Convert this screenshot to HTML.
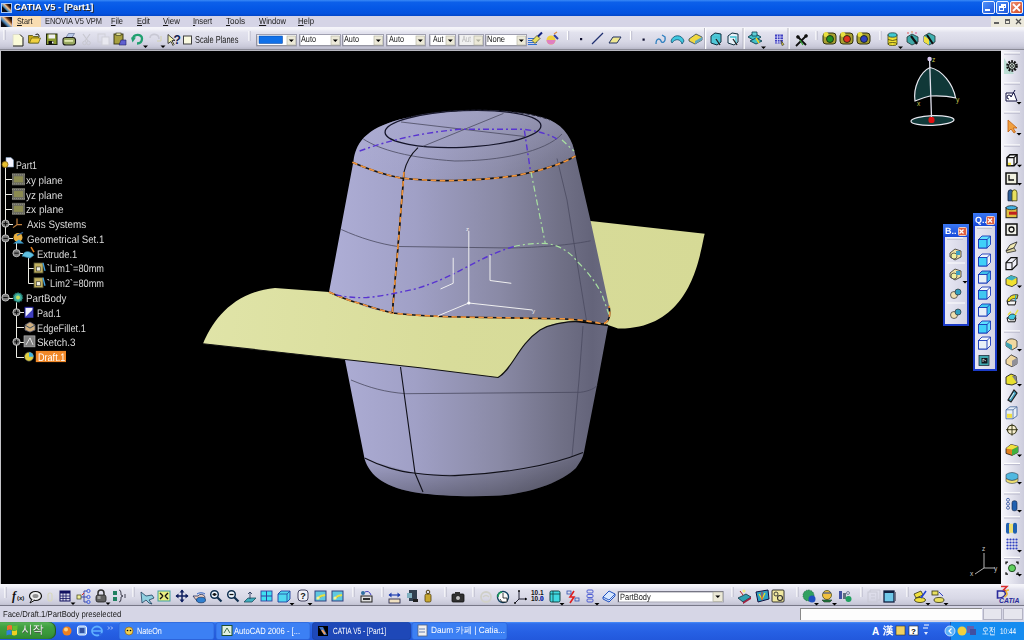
<!DOCTYPE html><html><head><meta charset="utf-8"><style>
*{margin:0;padding:0;box-sizing:border-box}
html,body{width:1024px;height:640px;overflow:hidden;background:#000}
body{position:relative;font-family:"Liberation Sans",sans-serif;font-size:9px;color:#000}
.a{position:absolute}
.t{position:absolute;white-space:nowrap;line-height:1;transform-origin:0 0;text-rendering:geometricPrecision;filter:grayscale(1);padding:1px 3px 2px 0;margin-top:-1px}
svg{position:absolute;left:0;top:0;overflow:visible}
</style></head><body><div class="a" style="left:0px;top:0px;width:1024px;height:16px;background:linear-gradient(#3a8af6 0%,#0c60ea 14%,#0558e6 50%,#0452de 85%,#0346c8 100%)"></div>
<div class="a" style="left:1px;top:3px;width:10.5px;height:9.5px;background:#a8c8f8"></div>
<div class="a" style="left:2px;top:4px;width:8.5px;height:7.5px;background:linear-gradient(45deg,#0a0a10 0%,#0a0a10 30%,#5090c0 42%,#f0c090 58%,#603010 72%,#0a0a10 85%)"></div>
<div class="t" style="left:14.20px;top:3px;font-size:8.85px;font-weight:bold;color:#fff;transform:scaleX(1.054);text-shadow:1px 1px 0 #0a2a80">CATIA V5 - [Part1]</div>
<div class="a" style="left:982px;top:1px;width:13px;height:13px;background:linear-gradient(135deg,#4f90f8,#1e58dc);border:1px solid #f0f4ff;border-radius:2px"></div>
<div class="a" style="left:996px;top:1px;width:13px;height:13px;background:linear-gradient(135deg,#4f90f8,#1e58dc);border:1px solid #f0f4ff;border-radius:2px"></div>
<div class="a" style="left:1010px;top:1px;width:13px;height:13px;background:linear-gradient(135deg,#f09070,#d04a28);border:1px solid #f0f4ff;border-radius:2px"></div>
<div class="a" style="left:985px;top:9px;width:5px;height:2px;background:#fff"></div>
<div class="a" style="left:1001px;top:4px;width:5px;height:4px;border:1px solid #fff;border-top-width:2px"></div>
<div class="a" style="left:999px;top:6px;width:5px;height:5px;border:1px solid #fff;border-top-width:2px;background:#3a70e4"></div>
<svg width="1024" height="640" style="pointer-events:none"><path d="M1013,4 L1020,11 M1020,4 L1013,11" stroke="#fff" stroke-width="1.8"/></svg>
<div class="a" style="left:0px;top:16px;width:1024px;height:11px;background:#d5d4e6"></div>
<div class="a" style="left:1px;top:17px;width:10.5px;height:10px;background:linear-gradient(45deg,#0a0a10 0%,#0a0a10 25%,#4a88c0 40%,#f0c090 58%,#703810 72%,#0a0a10 88%)"></div>
<div class="a" style="left:12.5px;top:16px;width:28px;height:11px;background:#f9ddb2"></div>
<div class="t" style="left:16.60px;top:17px;font-size:8.85px;font-weight:normal;color:#1a1a1a;transform:scaleX(0.825);"><u>S</u>tart</div>
<div class="t" style="left:45.00px;top:17px;font-size:8.85px;font-weight:normal;color:#1a1a1a;transform:scaleX(0.840);">ENOVIA V5 VPM</div>
<div class="t" style="left:111.00px;top:17px;font-size:8.85px;font-weight:normal;color:#1a1a1a;transform:scaleX(0.842);"><u>F</u>ile</div>
<div class="t" style="left:137.00px;top:17px;font-size:8.85px;font-weight:normal;color:#1a1a1a;transform:scaleX(0.849);"><u>E</u>dit</div>
<div class="t" style="left:163.00px;top:17px;font-size:8.85px;font-weight:normal;color:#1a1a1a;transform:scaleX(0.889);"><u>V</u>iew</div>
<div class="t" style="left:193.00px;top:17px;font-size:8.85px;font-weight:normal;color:#1a1a1a;transform:scaleX(0.859);"><u>I</u>nsert</div>
<div class="t" style="left:226.00px;top:17px;font-size:8.85px;font-weight:normal;color:#1a1a1a;transform:scaleX(0.921);"><u>T</u>ools</div>
<div class="t" style="left:259.00px;top:17px;font-size:8.85px;font-weight:normal;color:#1a1a1a;transform:scaleX(0.857);"><u>W</u>indow</div>
<div class="t" style="left:298.00px;top:17px;font-size:8.85px;font-weight:normal;color:#1a1a1a;transform:scaleX(0.878);"><u>H</u>elp</div>
<div class="a" style="left:991px;top:16px;width:33px;height:11px;background:#ece9dc"></div>
<div class="a" style="left:994px;top:22px;width:5px;height:2px;background:#606060"></div>
<div class="a" style="left:1005px;top:19px;width:5px;height:5px;border:1px solid #606060;border-top-width:2px"></div>
<svg width="1024" height="640"><path d="M1016,19 L1021,24 M1021,19 L1016,24" stroke="#505050" stroke-width="1.3"/></svg>
<div class="a" style="left:0px;top:27px;width:1024px;height:22px;background:linear-gradient(#f6f6fb 0%,#f2f2f8 10%,#e2e2ee 25%,#d8d8e6 65%,#cacada 88%,#b8b8c8 100%)"></div>
<div class="a" style="left:0px;top:48.5px;width:1024px;height:1.6px;background:#8a8a96"></div>
<div class="a" style="left:0px;top:50px;width:1024px;height:1px;background:#b8b8c0"></div>
<div class="a" style="left:0px;top:51px;width:1001px;height:533px;background:#000;border-left:1.2px solid #c4c4c8"></div>
<svg width="1024" height="640" viewBox="0 0 1024 640">
<defs>
<linearGradient id="bodyg" x1="330" y1="0" x2="612" y2="0" gradientUnits="userSpaceOnUse">
<stop offset="0" stop-color="#aeaed6"/><stop offset="0.3" stop-color="#a0a0c6"/><stop offset="0.6" stop-color="#8a8aa6"/><stop offset="0.82" stop-color="#707086"/><stop offset="0.93" stop-color="#64647a"/><stop offset="1" stop-color="#6c6c82"/>
</linearGradient>
<linearGradient id="capg" x1="0" y1="110" x2="0" y2="180" gradientUnits="userSpaceOnUse">
<stop offset="0" stop-color="#b0b0d4" stop-opacity="0.5"/><stop offset="1" stop-color="#b0b0d4" stop-opacity="0"/>
</linearGradient>
<linearGradient id="surfg" x1="200" y1="290" x2="700" y2="330" gradientUnits="userSpaceOnUse">
<stop offset="0" stop-color="#e0e4a8"/><stop offset="0.5" stop-color="#d8dc9a"/><stop offset="1" stop-color="#d6da96"/>
</linearGradient>
<linearGradient id="botg" x1="0" y1="455" x2="0" y2="497" gradientUnits="userSpaceOnUse">
<stop offset="0" stop-color="#000" stop-opacity="0"/><stop offset="1" stop-color="#000" stop-opacity="0.3"/>
</linearGradient>
</defs>
<path d="M329,292 L345,360 L364.6,459 C370,476 385,488 419,493 C440,496 470,497 500,495.5 C530,493 560,483 576,468 C580,462 583,458 584,452 L598,380 L608,326 Z" fill="url(#bodyg)"/>
<path d="M364.6,459 C370,476 385,488 419,493 C440,496 470,497 500,495.5 C530,493 560,483 576,468 C580,462 583,458 584,452 C560,470 470,478 414,473 Z" fill="url(#botg)"/>
<path d="M203,343.8 C212,322 232,292 275,288 L329,292 L590.6,221 L704.7,233.75 C700,250 694,330 618,328.5 L608,325 L584,321.4 C565,321 552,323 540,330 C518,345 512,370 498,377.5 L420,367.8 Z" fill="url(#surfg)"/>
<path d="M203,343.8 L420,367.8 L498,377.5 C512,370 518,345 540,330 C552,323 565,321 584,321.4 L608,325" fill="none" stroke="#101010" stroke-width="1.1"/>
<path d="M353.5,161 C356,140 370,126 406,118 C430,112 455,110.2 481.6,110.2 C510,110.5 535,114 550,120 C565,127 573,140 575.5,156 L590.6,221 L609,306 C611,316 610,322 603,324 C585,321 570,319 557,319 L472,317.3 C440,316 410,315 392.3,313 C375,310 360,306 358.3,303 C345,299 335,295 329,292 Z" fill="url(#bodyg)"/>
<path d="M353.5,161 C356,140 370,126 406,118 C430,112 455,110.2 481.6,110.2 C510,110.5 535,114 550,120 C565,127 573,140 575.5,156 C540,172 500,180 454.8,180.5 C410,180 370,172 353.5,161 Z" fill="url(#capg)"/>
<path d="M363.3,139 C380,150 410,158 454.8,161 C500,161 545,152 562,134" stroke="#4a4a60" stroke-width="0.8" fill="none"/>
<path d="M341.3,229.5 C360,238 380,244 398,246.5 L511.3,248 C550,247 575,244 590.6,240.8" stroke="#4a4a60" stroke-width="0.8" fill="none"/>
<path d="M351,380 C370,388 385,392 405.6,393.7 L580.4,392.3 C590,391 595,388 597,385.5" stroke="#4a4a60" stroke-width="0.8" fill="none"/>
<path d="M557,158.5 L567,200 L586.4,320" stroke="#4a4a60" stroke-width="0.8" fill="none"/>
<path d="M579,380 L572,456.5" stroke="#4a4a60" stroke-width="0.8" fill="none"/>
<path d="M583,326 L579,380" stroke="#4a4a60" stroke-width="0.8" fill="none"/>
<ellipse cx="463" cy="129" rx="78" ry="18.3" transform="rotate(-2.5 463 129)" fill="none" stroke="#15152a" stroke-width="1.3"/>
<path d="M401,122 L525.5,136.6 M423,146.3 L503.5,113.4" stroke="#4a4a60" stroke-width="0.8"/>
<path d="M406,118 C430,112 455,110.2 481.6,110.2 C510,110.5 535,114 550,120" fill="none" stroke="#202030" stroke-width="1" stroke-dasharray="4 2"/>
<path d="M418,147.6 C410,155 406,163 404,172 L398,246.5 L392.3,313" stroke="#101018" stroke-width="1.1" fill="none"/>
<path d="M400.5,367 L415,473 L423,492" stroke="#101018" stroke-width="1.1" fill="none"/>
<path d="M364.6,458 C380,466 400,472 414,473 C430,475 445,476 455,475.6 C500,474 550,466 583,452.4" stroke="#101018" stroke-width="1.1" fill="none"/>
<path d="M352.3,162.2 C370,170 390,176 401,178 C420,180 440,181 454.8,180.5 C480,180 500,178 515.7,175.6 C540,171 560,165 575.5,156" stroke="#141414" stroke-width="1.6" fill="none"/>
<path d="M352.3,162.2 C370,170 390,176 401,178 C420,180 440,181 454.8,180.5 C480,180 500,178 515.7,175.6 C540,171 560,165 575.5,156" stroke="#f0943c" stroke-width="1.7" fill="none" stroke-dasharray="5.5 3.5"/>
<path d="M329,292 C340,297 350,301 358.3,303 C370,307 380,310 392.3,313 C420,316 450,317 472,317.3 L557,318.7 C575,319 590,321 603,324 C609,322 611,316 609,306" stroke="#141414" stroke-width="1.6" fill="none"/>
<path d="M329,292 C340,297 350,301 358.3,303 C370,307 380,310 392.3,313 C420,316 450,317 472,317.3 L557,318.7 C575,319 590,321 603,324 C609,322 611,316 609,306" stroke="#f0943c" stroke-width="1.7" fill="none" stroke-dasharray="5.5 3.5"/>
<path d="M404,172 L398,246.5 L392.3,313" stroke="#141414" stroke-width="1.6" fill="none"/>
<path d="M404,172 L398,246.5 L392.3,313" stroke="#f0943c" stroke-width="1.7" fill="none" stroke-dasharray="5.5 3.5"/>
<path d="M359.6,151 C390,140 420,133 459.6,129.3 L523,129.3 C540,131 550,135 557,139" stroke="#5834d0" stroke-width="1.4" fill="none" stroke-dasharray="6 3 2 3"/>
<path d="M524.4,130.5 L530.4,170.7" stroke="#5834d0" stroke-width="1.4" fill="none" stroke-dasharray="6 3 2 3"/>
<path d="M335.7,294.6 C345,297 355,298 366.8,297.5 C385,296 400,292 415,289 C435,283 450,276 463,269 C480,260 495,252 514,246.5" stroke="#5834d0" stroke-width="1.4" fill="none" stroke-dasharray="6 3 2 3"/>
<path d="M514,246.5 C525,244 535,243 548,243.6 C560,246 570,252 576.5,260.7 C588,272 597,284 602,294.6 L609,314.5" stroke="#a8e0a0" stroke-width="1.2" fill="none" stroke-dasharray="6 3 2 3"/>
<path d="M531,172 L545.3,243.6" stroke="#a8e0a0" stroke-width="1.2" fill="none" stroke-dasharray="6 3 2 3"/>
<path d="M562,140 L574,151" stroke="#a8e0a0" stroke-width="1.2" fill="none" stroke-dasharray="6 3 2 3"/>
<path d="M468.8,303 L468.8,231 M468.8,303 L532.5,310 M468.8,303 L437.6,316" stroke="#f0f0f0" stroke-width="1" fill="none"/>
<path d="M453.2,257.8 L453.2,283.3 L440.5,289 M490,255 L490,280.5 L511.3,283.3" stroke="#f0f0f0" stroke-width="1" fill="none"/>
<circle cx="468.8" cy="303" r="1.6" fill="#fff"/>
<text x="466" y="231" font-size="6" fill="#eee" font-family="Liberation Sans">z</text>
<text x="532" y="313" font-size="6" fill="#eee" font-family="Liberation Sans">y</text>
</svg>
<svg width="1024" height="640">
<path d="M5.5,167 L5.5,297.52" stroke="#ecece4" stroke-width="1" fill="none"/>
<path d="M5,179.5 L12,179.5" stroke="#ecece4" stroke-width="1" fill="none"/>
<path d="M5,194.5 L12,194.5" stroke="#ecece4" stroke-width="1" fill="none"/>
<path d="M5,209.5 L12,209.5" stroke="#ecece4" stroke-width="1" fill="none"/>
<path d="M5,224.5 L13,224.5" stroke="#ecece4" stroke-width="1" fill="none"/>
<path d="M5,238.5 L13,238.5" stroke="#ecece4" stroke-width="1" fill="none"/>
<path d="M5,298.5 L13,298.5" stroke="#ecece4" stroke-width="1" fill="none"/>
<path d="M16.5,242.39999999999998 L16.5,253.5 L23,253.5" stroke="#ecece4" stroke-width="1" fill="none"/>
<path d="M28.5,257.18 L28.5,283.5 L34,283.5 M28.5,268.5 L34,268.5" stroke="#ecece4" stroke-width="1" fill="none"/>
<path d="M16.5,301.52 L16.5,357.5 L24,357.5" stroke="#ecece4" stroke-width="1" fill="none"/>
<path d="M16.5,312.5 L24,312.5" stroke="#ecece4" stroke-width="1" fill="none"/>
<path d="M16.5,327.5 L24,327.5" stroke="#ecece4" stroke-width="1" fill="none"/>
<path d="M16.5,342.5 L24,342.5" stroke="#ecece4" stroke-width="1" fill="none"/>
<circle cx="5.5" cy="223.62" r="3.6" fill="#7a7a7a" stroke="#d0d0d0" stroke-width="0.8"/><path d="M3.3,223.62 L7.7,223.62" stroke="#101010" stroke-width="1.1"/><path d="M5.5,221.42000000000002 L5.5,225.82" stroke="#101010" stroke-width="1.1"/>
<circle cx="5.5" cy="238.39999999999998" r="3.6" fill="#7a7a7a" stroke="#d0d0d0" stroke-width="0.8"/><path d="M3.3,238.39999999999998 L7.7,238.39999999999998" stroke="#101010" stroke-width="1.1"/>
<circle cx="5.5" cy="297.52" r="3.6" fill="#7a7a7a" stroke="#d0d0d0" stroke-width="0.8"/><path d="M3.3,297.52 L7.7,297.52" stroke="#101010" stroke-width="1.1"/>
<circle cx="16.5" cy="253.18" r="3.6" fill="#7a7a7a" stroke="#d0d0d0" stroke-width="0.8"/><path d="M14.3,253.18 L18.7,253.18" stroke="#101010" stroke-width="1.1"/>
<circle cx="16.5" cy="312.29999999999995" r="3.6" fill="#7a7a7a" stroke="#d0d0d0" stroke-width="0.8"/><path d="M14.3,312.29999999999995 L18.7,312.29999999999995" stroke="#101010" stroke-width="1.1"/><path d="M16.5,310.09999999999997 L16.5,314.49999999999994" stroke="#101010" stroke-width="1.1"/>
<circle cx="16.5" cy="341.86" r="3.6" fill="#7a7a7a" stroke="#d0d0d0" stroke-width="0.8"/><path d="M14.3,341.86 L18.7,341.86" stroke="#101010" stroke-width="1.1"/><path d="M16.5,339.66 L16.5,344.06" stroke="#101010" stroke-width="1.1"/>
<path d="M6,157.5 L11,157.5 L13.5,160 L13.5,167 L6,167 Z" fill="#f4f4ff" stroke="#80a0c0" stroke-width="0.6"/>
<circle cx="5" cy="164.5" r="3" fill="#e8c030" stroke="#806010" stroke-width="0.8"/>
<rect x="12" y="173.28" width="13" height="12" fill="#6a6a60"/>
<rect x="14" y="176.28" width="9" height="6" fill="#8a8a50"/>
<path d="M12,174.78 h13 M12,183.78 h13" stroke="#909088" stroke-width="1" stroke-dasharray="1 1"/>
<rect x="12" y="188.06" width="13" height="12" fill="#6a6a60"/>
<rect x="14" y="191.06" width="9" height="6" fill="#8a8a50"/>
<path d="M12,189.56 h13 M12,198.56 h13" stroke="#909088" stroke-width="1" stroke-dasharray="1 1"/>
<rect x="12" y="202.84" width="13" height="12" fill="#6a6a60"/>
<rect x="14" y="205.84" width="9" height="6" fill="#8a8a50"/>
<path d="M12,204.34 h13 M12,213.34 h13" stroke="#909088" stroke-width="1" stroke-dasharray="1 1"/>
<path d="M17,218.62 L17,224.62 L13,227.62 M17,224.62 L22,224.62" stroke="#c08040" stroke-width="1.2" fill="none"/>
<circle cx="18" cy="237.39999999999998" r="4.5" fill="#e8b040"/><path d="M13,243.39999999999998 L19,239.39999999999998 L24,243.39999999999998 Z" fill="#40a0d0"/><path d="M17,235.39999999999998 L23,232.39999999999998" stroke="#306090" stroke-width="1.2"/>
<path d="M22,256.18 C24,250.18 30,250.18 34,255.18 L30,258.18 Z" fill="#60c0e0" stroke="#206080" stroke-width="0.6"/><path d="M31,247.18 L34,252.18" stroke="#e08020" stroke-width="1.5"/>
<rect x="34" y="262.96" width="9" height="10" fill="#c0b060" stroke="#505030" stroke-width="0.8"/><rect x="36.5" y="266.96" width="4" height="4" fill="#f0f0e0" stroke="#303030" stroke-width="0.6"/><path d="M43,262.96 L45,270.96" stroke="#40a0e0" stroke-width="1.3"/>
<rect x="34" y="277.74" width="9" height="10" fill="#c0b060" stroke="#505030" stroke-width="0.8"/><rect x="36.5" y="281.74" width="4" height="4" fill="#f0f0e0" stroke="#303030" stroke-width="0.6"/><path d="M43,277.74 L45,285.74" stroke="#40a0e0" stroke-width="1.3"/>
<circle cx="18" cy="297.52" r="4.5" fill="#40b0a0" stroke="#1a6a60" stroke-width="1.5" stroke-dasharray="1.5 1"/><circle cx="18" cy="297.52" r="2" fill="#c0e060"/>
<rect x="25" y="307.29999999999995" width="8" height="10" fill="#f0f0ff" stroke="#2020a0" stroke-width="1"/><path d="M25,317.29999999999995 L33,309.29999999999995 L33,317.29999999999995 Z" fill="#4040c0"/>
<path d="M25,325.08 L30,322.08 L35,325.08 L35,330.08 L30,332.08 L25,330.08 Z" fill="#d0b080" stroke="#606070" stroke-width="0.8"/><path d="M25,325.08 L30,328.08 L35,325.08" stroke="#405060" stroke-width="1" fill="none"/>
<rect x="24" y="335.86" width="11" height="11" fill="#808080" stroke="#c0c0c0" stroke-width="0.6"/><path d="M26,344.86 L30,337.86 L33,344.86" stroke="#e0e0e0" stroke-width="1" fill="none"/>
<circle cx="29" cy="356.64" r="4.5" fill="#e0d040" stroke="#505050" stroke-width="0.6"/><path d="M29,352.14 A4.5,4.5 0 0 1 33.5,356.64 L29,356.64 Z" fill="#40b0e0"/>
<rect x="35.8" y="350.9" width="30.2" height="11.2" fill="#f08828"/>
</svg>
<div class="t" style="left:15.50px;top:161px;font-size:10.85px;font-weight:normal;color:#dcdcdc;transform:scaleX(0.810);">Part1</div>
<div class="t" style="left:26.40px;top:176px;font-size:10.85px;font-weight:normal;color:#dcdcdc;transform:scaleX(0.907);">xy plane</div>
<div class="t" style="left:26.40px;top:191px;font-size:10.85px;font-weight:normal;color:#dcdcdc;transform:scaleX(0.907);">yz plane</div>
<div class="t" style="left:26.40px;top:205px;font-size:10.85px;font-weight:normal;color:#dcdcdc;transform:scaleX(0.932);">zx plane</div>
<div class="t" style="left:26.70px;top:220px;font-size:10.85px;font-weight:normal;color:#dcdcdc;transform:scaleX(0.911);">Axis Systems</div>
<div class="t" style="left:26.70px;top:235px;font-size:10.85px;font-weight:normal;color:#dcdcdc;transform:scaleX(0.891);">Geometrical Set.1</div>
<div class="t" style="left:36.50px;top:250px;font-size:10.85px;font-weight:normal;color:#dcdcdc;transform:scaleX(0.868);">Extrude.1</div>
<div class="t" style="left:46.90px;top:264px;font-size:10.85px;font-weight:normal;color:#dcdcdc;transform:scaleX(0.849);">`Lim1`=80mm</div>
<div class="t" style="left:46.90px;top:279px;font-size:10.85px;font-weight:normal;color:#dcdcdc;transform:scaleX(0.849);">`Lim2`=80mm</div>
<div class="t" style="left:26.20px;top:294px;font-size:10.85px;font-weight:normal;color:#dcdcdc;transform:scaleX(0.904);">PartBody</div>
<div class="t" style="left:36.50px;top:309px;font-size:10.85px;font-weight:normal;color:#dcdcdc;transform:scaleX(0.840);">Pad.1</div>
<div class="t" style="left:36.50px;top:324px;font-size:10.85px;font-weight:normal;color:#dcdcdc;transform:scaleX(0.852);">EdgeFillet.1</div>
<div class="t" style="left:36.50px;top:338px;font-size:10.85px;font-weight:normal;color:#dcdcdc;transform:scaleX(0.912);">Sketch.3</div>
<div class="t" style="left:37.50px;top:353px;font-size:10.85px;font-weight:normal;color:#fff;transform:scaleX(0.836);">Draft.1</div>
<div class="a" style="left:1001px;top:50px;width:23px;height:534px;background:linear-gradient(90deg,#f8f8fc 0%,#e8e8f2 35%,#ccccdc 100%)"></div>
<div class="a" style="left:0px;top:584px;width:1024px;height:22px;background:linear-gradient(#f6f6fb 0%,#f2f2f8 10%,#e2e2ee 25%,#d8d8e6 65%,#cacada 88%,#b8b8c8 100%)"></div>
<div class="a" style="left:0px;top:605px;width:1024px;height:1px;background:#787888"></div>
<div class="a" style="left:0px;top:606px;width:1024px;height:16px;background:#d6d6e6"></div>
<div class="t" style="left:2.80px;top:610px;font-size:8.70px;font-weight:normal;color:#1a1a1a;transform:scaleX(0.887);">Face/Draft.1/PartBody preselected</div>
<div class="a" style="left:800px;top:608px;width:182px;height:12px;background:#fdfdfd;border-top:1px solid #888;border-left:1px solid #888"></div>
<div class="a" style="left:983px;top:608px;width:19px;height:12px;background:#e6e6ee;border:1px solid #b4b4c4"></div>
<div class="a" style="left:1003px;top:608px;width:20px;height:12px;background:#e6e6ee;border:1px solid #b4b4c4"></div>
<div class="a" style="left:0px;top:621.5px;width:1024px;height:18.5px;background:linear-gradient(#4a90f8 0%,#2e6ceb 10%,#2660e4 55%,#2258dc 100%)"></div>
<div class="a" style="left:0px;top:622px;width:56px;height:17px;background:linear-gradient(#58b458 0%,#40a040 30%,#38963a 70%,#2e8830 100%);border-radius:0 7px 7px 0;box-shadow:inset -1px 0 1px #205020"></div>
<div class="t" style="left:21.5px;top:624.5px;color:#f0f8f0;font-size:11px;text-shadow:0.5px 0.5px 0 #206020">시작</div>
<svg width="1024" height="640">
<path d="M4,30 L4,40" stroke="#fff" stroke-width="1.2"/><path d="M5.2,30 L5.2,40" stroke="#b8b8c8" stroke-width="0.8"/>
<path d="M13,34.5 h7 l3,3 v8.5 h-10 Z" fill="#fbfbd8" stroke="#d8d8c8" stroke-width="0.8"/><path d="M20,34.5 l3,3 v8.5 h-10" fill="none" stroke="#202020" stroke-width="1"/>
<path d="M28.5,35.5 h4 l1,1 h5 v6.5 h-10 Z" fill="#c8a818" stroke="#505010" stroke-width="0.8"/><path d="M29.5,43.0 l2,-5 h9 l-2,5 Z" fill="#f0d040" stroke="#606010" stroke-width="0.7"/><path d="M35.5,34.5 q3,-2 4,2" stroke="#202020" stroke-width="1" fill="none"/>
<rect x="46.5" y="34" width="10.5" height="10.5" fill="#8a9a30" stroke="#202810" stroke-width="1"/><rect x="48.5" y="34.5" width="6.5" height="4" fill="#f0f0f0"/><rect x="48.5" y="41" width="5" height="3.5" fill="#101010"/><rect x="52.0" y="41.5" width="1.5" height="2" fill="#fff"/>
<path d="M66,37.5 l2.5,-4 h6 l-2.5,4 Z" fill="#b8c8e8" stroke="#506080" stroke-width="0.6"/><path d="M63,39.5 q0,-2 3,-2 h7 q2,0 2.5,2 v3.5 q-0.5,2 -2.5,2 h-7 q-3,0 -3,-2 Z" fill="#98a860" stroke="#1a1a1a" stroke-width="1.1"/><rect x="64.5" y="40.0" width="8.5" height="1.8" fill="#e0e8b0"/>
<path d="M83,34 L88,41 M90,34 L85,41" stroke="#c8c8d0" stroke-width="1.2"/><circle cx="84.5" cy="43" r="1.8" fill="none" stroke="#c8c8d0"/><circle cx="88.5" cy="43" r="1.8" fill="none" stroke="#c8c8d0"/>
<rect x="98" y="34" width="7" height="8" fill="none" stroke="#d0d0d8" stroke-width="1"/><rect x="102" y="37" width="7" height="8" fill="#e8e8f0" stroke="#d0d0d8" stroke-width="1"/>
<rect x="114" y="34" width="9" height="10" fill="#a8a040" stroke="#303010" stroke-width="0.9"/><rect x="116" y="33" width="5" height="2.5" fill="#e0e0a0" stroke="#303010" stroke-width="0.6"/><path d="M119,45 l2,-5 h5 v5 Z" fill="#6060d0" stroke="#202060" stroke-width="0.6"/>
<path d="M133,39.5 C133,33.5 142,33.5 142,38.5 C142,42.5 139,43.5 137,43.5" stroke="#20a070" stroke-width="2.3" fill="none"/><path d="M131,37.5 L136,37.5 L132.5,42.5 Z" fill="#20a070"/>
<path d="M143.0,45.5 L148.0,45.5 L145.5,48.0 Z" fill="#000"/>
<path d="M159,39 C159,33 150,33 150,38" stroke="#c8c8d4" stroke-width="1.6" fill="none"/><path d="M161,36 v5 h-4" stroke="#d0d0a0" stroke-width="0.8" fill="none"/>
<path d="M160.5,45.5 L165.5,45.5 L163,48.0 Z" fill="#000"/>
<path d="M168,34.5 L168,43.5 L171,41.5 L173,45.5 L174,44.5 L172,40.5 L175,40.5 Z" fill="#f0f0b0" stroke="#202020" stroke-width="0.8"/><text x="173.5" y="43.5" font-family="Liberation Sans" font-weight="bold" font-size="12" fill="#102050">?</text>
<rect x="183.5" y="36" width="8" height="8" fill="#fafae0" stroke="#404040" stroke-width="1"/>
<path d="M249,31 L249,41" stroke="#fff" stroke-width="1.2"/><path d="M250.2,31 L250.2,41" stroke="#b8b8c8" stroke-width="0.8"/>
<path d="M528,38.5 h9 M528,40.5 h9 M528,42.5 h9 M528,44.5 h9" stroke="#3070d0" stroke-width="1.2"/><path d="M532,40.5 L537,35.5 L540,38.5 L535,43.5 Z" fill="#e8e060" stroke="#404010" stroke-width="0.7"/><path d="M538,36.5 L542,32.5" stroke="#102080" stroke-width="2"/>
<circle cx="551" cy="40" r="4.5" fill="#f0d040"/><path d="M546.5,40 a4.5,4.5 0 0 0 9,0 Z" fill="#e080c0"/><path d="M554,35 L558,39" stroke="#3040a0" stroke-width="2"/><path d="M554,34 L557,32" stroke="#e09040" stroke-width="1.2"/>
<path d="M567.5,31 L567.5,40" stroke="#fff" stroke-width="1.2"/><path d="M568.7,31 L568.7,40" stroke="#b8b8c8" stroke-width="0.8"/>
<rect x="580" y="38" width="2.2" height="2.2" fill="#101030"/>
<path d="M592,44 L603,33" stroke="#203070" stroke-width="1.3"/>
<path d="M609,43 L613,37 L621,37 L617,43 Z" fill="#f0e890" stroke="#203060" stroke-width="1"/>
<path d="M630.5,31 L630.5,40" stroke="#fff" stroke-width="1.2"/><path d="M631.7,31 L631.7,40" stroke="#b8b8c8" stroke-width="0.8"/>
<rect x="642.5" y="38.5" width="2.2" height="2.2" fill="#101030"/>
<path d="M656,44 C656,38 660,38 661,41 C662,44 666,42 665,37 L662,35" stroke="#3080c0" stroke-width="1.3" fill="none"/>
<path d="M671,41 C673,34 682,34 684,41 L682,44 C681,39 675,38 672,43 Z" fill="#40c8e0" stroke="#105070" stroke-width="0.8"/>
<path d="M689,39 L696,34 L702,37 L702,40 L695,44 L689,41 Z" fill="#f0d840" stroke="#304050" stroke-width="0.8"/><path d="M695,44 L702,40 L702,37 L695,41 Z" fill="#60a8c0"/>
<path d="M705.5,28 L705.5,49" stroke="#fff" stroke-width="1.5"/><path d="M704.5,28 L704.5,49" stroke="#a8a8b8" stroke-width="0.8"/>
<path d="M711,36 L715,33 L721,34 L721,42 L717,45 L711,43 Z" fill="#50c8d8" stroke="#103040" stroke-width="1"/><path d="M713,37 L719,37 L719,43" stroke="#40c0d0" stroke-width="1.3" fill="none"/><path d="M716,39 L720,45" stroke="#202020" stroke-width="1.3"/>
<path d="M728,36 L732,33 L738,34 L738,42 L734,45 L728,43 Z" fill="#e8f0f8" stroke="#103040" stroke-width="1"/><path d="M730,37 L736,37 L736,43" stroke="#40c0d0" stroke-width="1.3" fill="none"/><path d="M733,39 L737,45" stroke="#202020" stroke-width="1.3"/>
<path d="M744,28 L744,49" stroke="#fff" stroke-width="1.5"/><path d="M743,28 L743,49" stroke="#a8a8b8" stroke-width="0.8"/>
<path d="M748,37 L754,33 L761,37 L755,41 Z" fill="#40c0c8" stroke="#104050" stroke-width="0.9"/><path d="M750,41 L756,38 L762,41 L756,44 Z" fill="#40c0c8" stroke="#104050" stroke-width="0.9"/><path d="M752,32 h5 v4 h-5 Z" fill="#60d0d8" stroke="#104050" stroke-width="0.8"/><path d="M756,38 L759,43" stroke="#f0d020" stroke-width="1.5"/>
<path d="M761.0,46.5 L766.0,46.5 L763.5,49.0 Z" fill="#000"/>
<rect x="775" y="34.5" width="8" height="9" fill="#4040c0"/><path d="M775,37.0 h8 M775,39.5 h8 M775,42.0 h8 M777.5,34.5 v9 M780,34.5 v9" stroke="#e8e8ff" stroke-width="0.7"/><path d="M781,40.5 l3,4 l-2,1 Z" fill="#f0e040" stroke="#202020" stroke-width="0.6"/>
<path d="M789,28 L789,49" stroke="#fff" stroke-width="1.5"/><path d="M788,28 L788,49" stroke="#a8a8b8" stroke-width="0.8"/>
<path d="M796,46 L807,35 M797,36 L806,45" stroke="#101010" stroke-width="1.8"/><path d="M800,40 L803,45" stroke="#30a030" stroke-width="1.3"/><circle cx="798" cy="37" r="1.8" fill="#101010"/><circle cx="806" cy="36" r="1.8" fill="#101010"/>
<path d="M816,31 L816,40" stroke="#fff" stroke-width="1.2"/><path d="M817.2,31 L817.2,40" stroke="#b8b8c8" stroke-width="0.8"/>
<rect x="823" y="33" width="13" height="11" rx="3" fill="#a8a030" stroke="#303010" stroke-width="1"/><circle cx="826" cy="34.5" r="2.5" fill="#e8e040"/><circle cx="830" cy="39" r="3.5" fill="#209020" stroke="#102010" stroke-width="0.8"/>
<rect x="840" y="33" width="13" height="11" rx="3" fill="#a8a030" stroke="#303010" stroke-width="1"/><circle cx="843" cy="34.5" r="2.5" fill="#e8e040"/><circle cx="847" cy="39" r="3.5" fill="#e03020" stroke="#102010" stroke-width="0.8"/>
<rect x="857" y="33" width="13" height="11" rx="3" fill="#a8a030" stroke="#303010" stroke-width="1"/><circle cx="860" cy="34.5" r="2.5" fill="#e8e040"/><circle cx="864" cy="39" r="3.5" fill="#3040c0" stroke="#102010" stroke-width="0.8"/>
<path d="M880,31 L880,40" stroke="#fff" stroke-width="1.2"/><path d="M881.2,31 L881.2,40" stroke="#b8b8c8" stroke-width="0.8"/>
<rect x="888" y="35" width="9" height="9" fill="#f0e030" stroke="#404010" stroke-width="0.8"/><ellipse cx="892.5" cy="35" rx="4.5" ry="2.2" fill="#40c8d0" stroke="#204040" stroke-width="0.8"/><ellipse cx="892.5" cy="44" rx="4.5" ry="1.5" fill="#f0e030" stroke="#404010" stroke-width="0.8"/><path d="M888,39.5 q4.5,2 9,0" stroke="#404010" stroke-width="0.8" fill="none"/>
<path d="M898.0,46.5 L903.0,46.5 L900.5,49.0 Z" fill="#000"/>
<path d="M907,37 L912,34 L918,37 L918,42 L912,45 L907,42 Z" fill="#40a8a8" stroke="#203030" stroke-width="0.8"/><path d="M911,36 L917,44" stroke="#101010" stroke-width="2.2"/><circle cx="908" cy="33" r="0.8" fill="#e04040"/><circle cx="912" cy="32" r="0.8" fill="#e08040"/><circle cx="916" cy="33" r="0.8" fill="#e04080"/>
<path d="M924,36 L929,33 L935,36 L935,42 L929,45 L924,42 Z" fill="#40b0b0" stroke="#203030" stroke-width="0.8"/><path d="M924,36 L929,39 L929,45 L924,42 Z" fill="#f0e040"/><path d="M927,35 L933,44" stroke="#101010" stroke-width="2"/>
</svg>
<svg width="1024" height="640">
<path d="M5,587 L5,598" stroke="#fff" stroke-width="1.2"/><path d="M6.2,587 L6.2,598" stroke="#b8b8c8" stroke-width="0.8"/>
<text x="12" y="600" font-family="Liberation Serif" font-style="italic" font-weight="bold" font-size="12" fill="#101010">f</text><text x="17" y="600" font-family="Liberation Sans" font-weight="bold" font-size="6" fill="#101010">(x)</text>
<ellipse cx="35.5" cy="596" rx="6" ry="4.5" fill="#f0f0f0" stroke="#101010" stroke-width="1.2"/><path d="M32,599 L30,603 L35,600" fill="#f0f0f0" stroke="#101010" stroke-width="1"/><ellipse cx="35.5" cy="596" rx="3" ry="2" fill="#909090"/>
<rect x="48" y="593" width="4" height="8" rx="2" fill="none" stroke="#d8d8c0" stroke-width="1.2"/>
<rect x="60" y="591" width="10" height="10" fill="#d8d8e8" stroke="#101060" stroke-width="1"/><rect x="60" y="591" width="10" height="2.5" fill="#101060"/><path d="M60,596 h10 M60,598.5 h10 M63,593 v8 M66,593 v8" stroke="#101060" stroke-width="0.8"/>
<path d="M70.5,602.5 L75.5,602.5 L73,605.0 Z" fill="#000"/>
<rect x="77" y="595" width="4" height="4" fill="#f0f0a0" stroke="#404010" stroke-width="0.7"/><path d="M81,597 h3 M84,591 v11 M84,591 h3 M84,597 h3 M84,602 h3" stroke="#3040a0" stroke-width="0.9"/><circle cx="88.5" cy="591" r="1.6" fill="none" stroke="#3050e0" stroke-width="0.9"/><circle cx="88.5" cy="597" r="1.6" fill="none" stroke="#3050e0" stroke-width="0.9"/><circle cx="88.5" cy="602" r="1.6" fill="none" stroke="#3050e0" stroke-width="0.9"/><path d="M82,595 l2,-2" stroke="#e02020" stroke-width="1"/>
<path d="M98,595 v-2 a3,3 0 0 1 6,0 v2" stroke="#303030" stroke-width="1.5" fill="none"/><rect x="96" y="595" width="10" height="7" rx="2" fill="#606060" stroke="#202020" stroke-width="0.8"/><rect x="97.5" y="596" width="3" height="3" fill="#a0a0a0"/>
<path d="M105.5,602.5 L110.5,602.5 L108,605.0 Z" fill="#000"/>
<rect x="113" y="591" width="4" height="4" fill="#208060"/><rect x="113" y="597" width="4" height="4" fill="#208060"/><path d="M119,590 q2,0 2,3 v2 l2,1 l-2,1 v2 q0,3 -2,3" stroke="#303040" stroke-width="0.9" fill="none"/><path d="M124,595 h2 M124,597 h2" stroke="#303040" stroke-width="0.9"/>
<path d="M133,587 L133,597" stroke="#fff" stroke-width="1.2"/><path d="M134.2,587 L134.2,597" stroke="#b8b8c8" stroke-width="0.8"/>
<path d="M141,592 l5,4 l6,-1 l2,3 l-5,2 l3,4 l-3,-1 l-3,-3 l-4,3 Z" fill="#90d0e0" stroke="#204060" stroke-width="0.8"/>
<rect x="158" y="591" width="12" height="10" fill="#e8f080" stroke="#40a0a0" stroke-width="1"/><path d="M160,593 l3,3 M168,593 l-3,3 M160,599 l3,-3 M168,599 l-3,-3" stroke="#101010" stroke-width="1.4"/>
<path d="M182,590 v12 M176,596 h12" stroke="#102060" stroke-width="1.5"/><path d="M182,589.5 l-2.5,3 h5 Z M182,602.5 l-2.5,-3 h5 Z M175.5,596 l3,-2.5 v5 Z M188.5,596 l-3,-2.5 v5 Z" fill="#102060"/>
<path d="M193,596 h5 a4,4 0 0 1 7,1 l-1,4 h-7 Z" fill="#f0d0c0" stroke="#203060" stroke-width="0.8"/><ellipse cx="201" cy="600" rx="4.5" ry="2.8" fill="#3080d0" stroke="#103060" stroke-width="0.7"/><path d="M197,594 a5,3 0 0 1 8,0" stroke="#3060c0" stroke-width="1" fill="none"/>
<circle cx="214.5" cy="594.5" r="3.8" fill="#f0f8ff" stroke="#103050" stroke-width="1.5"/><path d="M217,597 L221.5,601.5" stroke="#103050" stroke-width="2.2"/><path d="M212.5,594.5 h4" stroke="#101010" stroke-width="1.3"/><circle cx="214.5" cy="594.5" r="1.4" fill="#101010"/>
<circle cx="231.5" cy="594.5" r="3.8" fill="#f0f8ff" stroke="#103050" stroke-width="1.5"/><path d="M234,597 L238.5,601.5" stroke="#103050" stroke-width="2.2"/><path d="M229.5,594.5 h4" stroke="#101010" stroke-width="1.3"/>
<path d="M244,602 L248,598 h8 l-4,4 Z" fill="#40b0c0" stroke="#205060" stroke-width="0.8"/><path d="M250,599 v-7 M248,594 l2,-2 l2,2" stroke="#304060" stroke-width="0.9" fill="none"/>
<rect x="261" y="591" width="11" height="10" fill="#40e0f0" stroke="#3040a0" stroke-width="0.9"/><path d="M266.5,591 v10 M261,596 h11" stroke="#3040a0" stroke-width="1"/>
<path d="M278,594 L281,591 L290,591 L290,599 L287,602 L278,602 Z" fill="#50d8f0" stroke="#2040a0" stroke-width="0.9"/><path d="M278,594 h9 v8 M287,594 l3,-3" stroke="#2040a0" stroke-width="0.8" fill="none"/>
<path d="M289.5,603 L294.5,603 L292,605.5 Z" fill="#000"/>
<rect x="298" y="590" width="10" height="11" rx="3" fill="#f0f0f8" stroke="#303050" stroke-width="0.9"/><text x="300.3" y="599" font-family="Liberation Sans" font-weight="bold" font-size="9" fill="#101010">?</text>
<path d="M307.5,603 L312.5,603 L310,605.5 Z" fill="#000"/>
<rect x="315" y="591" width="11" height="10" fill="#60c8e0" stroke="#304080" stroke-width="1"/><path d="M317,599 l4,-3 l4,-1" stroke="#e8e040" stroke-width="2"/><circle cx="318" cy="598" r="1.5" fill="#f0f0a0"/>
<rect x="332" y="591" width="11" height="10" fill="#60c8e0" stroke="#304080" stroke-width="1"/><path d="M334,599 l4,-3 l4,-1" stroke="#e8e040" stroke-width="2"/><circle cx="335" cy="598" r="1.5" fill="#f0f0a0"/>
<path d="M353,587 L353,597" stroke="#fff" stroke-width="1.2"/><path d="M354.2,587 L354.2,597" stroke="#b8b8c8" stroke-width="0.8"/>
<circle cx="363" cy="593" r="2" fill="#3070a0"/><path d="M365,592 q4,-2 6,3" stroke="#4040c0" stroke-width="1" fill="none"/><rect x="361" y="596" width="11" height="6" fill="#e0e0e0" stroke="#202020" stroke-width="1"/><rect x="363" y="598" width="7" height="2" fill="#303030"/>
<path d="M382,587 L382,597" stroke="#fff" stroke-width="1.2"/><path d="M383.2,587 L383.2,597" stroke="#b8b8c8" stroke-width="0.8"/>
<path d="M389,595 h11" stroke="#2040b0" stroke-width="1.2"/><path d="M388.5,595 l3,-2.5 v5 Z M400.5,595 l-3,-2.5 v5 Z" fill="#2040b0"/><rect x="389" y="599" width="11" height="4" fill="#f0e0c0" stroke="#303050" stroke-width="0.9"/>
<rect x="409" y="590" width="8" height="11" fill="#304050"/><rect x="407" y="593" width="5" height="5" fill="#80b0c0"/><rect x="413" y="599" width="5" height="3" fill="#202020"/>
<rect x="425" y="594" width="6" height="8" rx="1.5" fill="#c8a830" stroke="#504010" stroke-width="0.8"/><circle cx="428" cy="592" r="1.8" fill="none" stroke="#504010" stroke-width="1"/>
<path d="M445,587 L445,597" stroke="#fff" stroke-width="1.2"/><path d="M446.2,587 L446.2,597" stroke="#b8b8c8" stroke-width="0.8"/>
<rect x="452" y="594" width="12" height="8" rx="1" fill="#303030" stroke="#101010" stroke-width="0.8"/><rect x="455" y="592" width="5" height="3" fill="#303030"/><circle cx="458" cy="598" r="2.5" fill="#c0c0c0" stroke="#101010" stroke-width="0.8"/>
<path d="M473,587 L473,597" stroke="#fff" stroke-width="1.2"/><path d="M474.2,587 L474.2,597" stroke="#b8b8c8" stroke-width="0.8"/>
<circle cx="486" cy="597" r="5" fill="none" stroke="#d0d0c8" stroke-width="1.8"/><path d="M483,597 q3,-3 6,0" stroke="#d0d0c8" stroke-width="1.5" fill="none"/>
<circle cx="503" cy="597" r="5.5" fill="#f8f8f8" stroke="#104060" stroke-width="1.4"/><path d="M498,597 a5,5 0 0 1 4,-5" stroke="#20a060" stroke-width="1.5" fill="none"/><path d="M503,593 v5 h4 v4 h-5 l-2,-3" fill="#fff" stroke="#101010" stroke-width="0.8"/>
<path d="M519,591 v8 l-4,4 M519,599 h8" stroke="#202030" stroke-width="1" fill="none"/><circle cx="519" cy="591" r="0.9" fill="#000"/><circle cx="515" cy="603" r="0.9" fill="#000"/><path d="M527,599 l-2,-1.5 v3 Z" fill="#000"/>
<text x="531" y="595" font-family="Liberation Sans" font-weight="bold" font-size="6.5" fill="#101010">10.1</text><text x="531" y="601" font-family="Liberation Sans" font-weight="bold" font-size="6.5" fill="#101010">10.0</text><text x="540" y="601" font-family="Liberation Sans" font-weight="bold" font-size="6.5" fill="#2040d0">0</text>
<rect x="550" y="591" width="10" height="11" rx="1.5" fill="#40d8e0" stroke="#104040" stroke-width="1"/><path d="M550,594 h10 M553,591 v11" stroke="#104040" stroke-width="0.8"/>
<path d="M559.5,603 L564.5,603 L562,605.5 Z" fill="#000"/>
<path d="M574,591 L570,597 L574,597 L570,603" stroke="#e02020" stroke-width="1.6" fill="none"/><rect x="567" y="591" width="4" height="3" fill="none" stroke="#3050b0" stroke-width="0.8"/><rect x="575" y="598" width="4" height="3" fill="none" stroke="#3050b0" stroke-width="0.8"/>
<rect x="587" y="590" width="6" height="3" rx="1" fill="none" stroke="#4050d0" stroke-width="0.9"/><rect x="587" y="594.5" width="6" height="3" rx="1" fill="none" stroke="#4050d0" stroke-width="0.9"/><rect x="587" y="599" width="6" height="3" rx="1" fill="none" stroke="#4050d0" stroke-width="0.9"/>
<path d="M594.5,603 L599.5,603 L597,605.5 Z" fill="#000"/>
<path d="M603,597 L609,591 L615,594 L615,596 L609,602 L603,599 Z" fill="#d8e8ff" stroke="#2050c0" stroke-width="1"/><path d="M603,597 L609,600 L615,594" stroke="#2050c0" stroke-width="0.9" fill="none"/>
<rect x="618" y="591.5" width="105.5" height="10.5" fill="#fff" stroke="#a8a8b4" stroke-width="1"/><path d="M618.5,602 V591.8 H723" stroke="#606070" stroke-width="1" fill="none"/>
<rect x="713" y="592" width="9.5" height="9.5" fill="#ece9d8" stroke="#a0a090" stroke-width="0.6"/>
<path d="M715.3,595.5 L720.3,595.5 L717.8,598.0 Z" fill="#000"/>
<path d="M732,587 L732,597" stroke="#fff" stroke-width="1.2"/><path d="M733.2,587 L733.2,597" stroke="#b8b8c8" stroke-width="0.8"/>
<path d="M738,598 L746,594 L751,597 L743,602 Z" fill="#30a0b0" stroke="#103040" stroke-width="0.8"/><path d="M743,602 L751,597 v2 l-8,5 Z" fill="#a02040"/><path d="M740,591 l3,4" stroke="#c02020" stroke-width="1"/><circle cx="744" cy="591" r="1.5" fill="#f0f080"/>
<path d="M756,592 L768,590 L769,599 L758,602 Z" fill="#30a0c0" stroke="#101040" stroke-width="1"/><path d="M759,594 l3,5 l3,-6" stroke="#f0e020" stroke-width="1.2" fill="none"/><path d="M762,592 v8" stroke="#e02020" stroke-width="0.9"/>
<rect x="772" y="590" width="12" height="12" rx="1" fill="#f0e8a0" stroke="#202020" stroke-width="0.9"/><circle cx="776" cy="594" r="2" fill="none" stroke="#303030" stroke-width="0.9"/><circle cx="780" cy="598" r="2.5" fill="none" stroke="#303030" stroke-width="1.1"/>
<path d="M797,587 L797,597" stroke="#fff" stroke-width="1.2"/><path d="M798.2,587 L798.2,597" stroke="#b8b8c8" stroke-width="0.8"/>
<circle cx="808.5" cy="595.5" r="5.5" fill="#30a060" stroke="#105030" stroke-width="0.6" stroke-dasharray="1.5 1"/><circle cx="812" cy="599" r="3.5" fill="#2050c0"/>
<path d="M814.0,603 L819.0,603 L816.5,605.5 Z" fill="#000"/>
<circle cx="827" cy="595" r="4.5" fill="#f0c040" stroke="#505010" stroke-width="0.8"/><path d="M822,600 h10 l-2,2 h-6 Z" fill="#208040" stroke="#203020" stroke-width="0.6"/><path d="M823,593 h8" stroke="#2040a0" stroke-width="1"/>
<path d="M832.0,603 L837.0,603 L834.5,605.5 Z" fill="#000"/>
<rect x="839" y="591" width="3" height="8" fill="#4050a0"/><rect x="843" y="593" width="3" height="6" fill="#607080"/><circle cx="848.5" cy="599" r="3" fill="#20a060"/><circle cx="848" cy="593" r="1.5" fill="none" stroke="#506080" stroke-width="0.7"/>
<path d="M861,587 L861,597" stroke="#fff" stroke-width="1.2"/><path d="M862.2,587 L862.2,597" stroke="#b8b8c8" stroke-width="0.8"/>
<rect x="868" y="592" width="9" height="10" fill="none" stroke="#c8c8d4" stroke-width="1"/><path d="M870,592 v-2 h10 v10 h-2 M871,595 h4 M871,598 h4" stroke="#c8c8d4" stroke-width="1" fill="none"/>
<rect x="884" y="591" width="10" height="11" fill="#70c8e8" stroke="#102040" stroke-width="1.3"/><rect x="884" y="591" width="10" height="2" fill="#102040"/><path d="M895.5,592 v9" stroke="#606070" stroke-width="0.8"/>
<path d="M907,587 L907,597" stroke="#fff" stroke-width="1.2"/><path d="M908.2,587 L908.2,597" stroke="#b8b8c8" stroke-width="0.8"/>
<path d="M914,594 L921,591 L923,595 L916,598 Z" fill="#f0e040" stroke="#303010" stroke-width="0.8"/><ellipse cx="920" cy="600" rx="5.5" ry="2.5" fill="#f0e040" stroke="#303010" stroke-width="0.8"/><path d="M921,598 L926,591" stroke="#2040d0" stroke-width="1.5"/>
<path d="M925.5,603 L930.5,603 L928,605.5 Z" fill="#000"/>
<rect x="932" y="591" width="6" height="4" fill="#e8e060" stroke="#303010" stroke-width="0.8"/><ellipse cx="939" cy="600" rx="5" ry="2.5" fill="#e8e060" stroke="#303010" stroke-width="0.8"/><path d="M939,592 l4,4" stroke="#3040c0" stroke-width="1" fill="none"/>
<path d="M943.5,603 L948.5,603 L946,605.5 Z" fill="#000"/>
<path d="M1001,586.5 h6 l-3.5,3.5 q4,0.5 2.5,4" stroke="#d83030" stroke-width="1.5" fill="none"/><path d="M997.5,591 h4 q5,0 3.5,4 q-1.5,3 -7.5,3 Z" fill="none" stroke="#2a2a9a" stroke-width="1.6"/><path d="M1009,590 q-4,0 -2.5,2.5 q2,2 -2,4.5" stroke="#e8b838" stroke-width="1.6" fill="none"/><text x="999" y="603.3" font-family="Liberation Sans" font-style="italic" font-weight="bold" font-size="6.6" fill="#2a2a9a" textLength="20.5" lengthAdjust="spacingAndGlyphs">CATIA</text>
</svg>
<svg width="1024" height="640">
<path d="M1004,53 L1020,53" stroke="#fff" stroke-width="1.2"/><path d="M1004,54.2 L1020,54.2" stroke="#b0b0c4" stroke-width="0.8"/>
<path d="M1004,58 L1004,74 L1014,74 Z" fill="#a8d8c8" opacity="0.7"/>
<circle cx="1012" cy="66" r="4.6" fill="none" stroke="#101010" stroke-width="2.4" stroke-dasharray="1.8 1.1"/><circle cx="1012" cy="66" r="3.3" fill="#d8e8e0" stroke="#101010" stroke-width="1.1"/><circle cx="1012" cy="66" r="1.4" fill="none" stroke="#101010" stroke-width="0.9"/>
<path d="M1004,83 L1020,83" stroke="#fff" stroke-width="1.2"/><path d="M1004,84.2 L1020,84.2" stroke="#b0b0c4" stroke-width="0.8"/>
<path d="M1006,93 L1014,93 L1017,101 L1006,101 Z" fill="#fff" stroke="#101040" stroke-width="1"/><path d="M1009,99 a2,2 0 1 1 2,-2 L1015,90" stroke="#101040" stroke-width="1" fill="none"/>
<path d="M1016.5,102 L1021.5,102 L1019,104.5 Z" fill="#000"/>
<path d="M1004,112 L1020,112" stroke="#fff" stroke-width="1.2"/><path d="M1004,113.2 L1020,113.2" stroke="#b0b0c4" stroke-width="0.8"/>
<path d="M1008,120 L1008,132 L1011,129 L1014,133 L1015.5,132 L1013,128 L1017,128 Z" fill="#f0a040" stroke="#c06010" stroke-width="0.8"/>
<path d="M1016.5,133 L1021.5,133 L1019,135.5 Z" fill="#000"/>
<path d="M1004,145 L1020,145" stroke="#fff" stroke-width="1.2"/><path d="M1004,146.2 L1020,146.2" stroke="#b0b0c4" stroke-width="0.8"/>
<path d="M1007,157.7 L1010,154.7 L1017,154.7 L1017,162.7 L1014,165.7 L1007,165.7 Z" fill="#f8f8f8" stroke="#101010" stroke-width="1.6"/><path d="M1007,157.7 H1014 V165.7 M1014,157.7 L1017,154.7" stroke="#101010" stroke-width="1.2" fill="none"/><rect x="1008" y="162.7" width="3" height="2.5" fill="#f0e040"/>
<path d="M1017.0,164.7 L1022.0,164.7 L1019.5,167.2 Z" fill="#000"/>
<rect x="1006" y="173" width="11" height="11" fill="#f0f0e0" stroke="#101010" stroke-width="1.5"/><path d="M1009,175 v5 h5" stroke="#101010" stroke-width="1.3" fill="none"/>
<path d="M1017.0,183 L1022.0,183 L1019.5,185.5 Z" fill="#000"/>
<path d="M1008,200.8 v-8 a2.5,3 0 0 1 5,0 v8 Z" fill="#30609a" stroke="#102040" stroke-width="0.8"/><path d="M1012,200.8 v-8 a2.5,3 0 0 1 5,0 v8 Z" fill="#e8e060" stroke="#404010" stroke-width="0.8"/>
<rect x="1006" y="207.7" width="11" height="10" fill="#e0c040" stroke="#202020" stroke-width="1"/><ellipse cx="1011.5" cy="207.7" rx="5.5" ry="2" fill="#40b0e0" stroke="#202020" stroke-width="0.8"/><rect x="1009" y="211.7" width="8" height="3" fill="#c02020"/>
<rect x="1006" y="224" width="11" height="11" fill="#f0f0e8" stroke="#101010" stroke-width="1.5"/><circle cx="1011.5" cy="229.5" r="2.5" fill="none" stroke="#101010" stroke-width="1.3"/>
<path d="M1006,250.9 L1010,244.9 L1017,241.9 L1014,247.9 Z" fill="#f0e8b0" stroke="#303030" stroke-width="0.9"/><path d="M1006,250.9 L1014,247.9 l2,3 L1007,252.9 Z" fill="#d8d0a0" stroke="#303030" stroke-width="0.8"/>
<path d="M1006,262.7 L1011,257.7 L1017,257.7 L1017,264.7 L1012,269.7 L1006,269.7 Z" fill="#f0f0f8" stroke="#101010" stroke-width="1.2"/><path d="M1006,262.7 h6 v7 M1012,262.7 l5,-5" stroke="#101010" stroke-width="1" fill="none"/>
<path d="M1006,278.6 L1011,275.6 L1017,277.6 L1017,283.6 L1012,286.6 L1006,284.6 Z" fill="#f0e030" stroke="#202020" stroke-width="0.8"/><path d="M1006,278.6 L1011,275.6 L1017,277.6 L1012,280.6 Z" fill="#40b0c0"/>
<path d="M1017.0,285.6 L1022.0,285.6 L1019.5,288.1 Z" fill="#000"/>
<path d="M1007,300.9 L1016,300.9 L1015,304.9 L1008,304.9 Z" fill="#f8f8f8" stroke="#101010" stroke-width="1"/><path d="M1007,300.9 C1009,295.9 1013,293.9 1018,294.9 L1017,298.9 C1014,297.9 1011,298.9 1009,301.9 Z" fill="#e8d820" stroke="#202020" stroke-width="0.8"/><path d="M1016,294.9 L1015,300.9" stroke="#30a0c0" stroke-width="1.2"/>
<path d="M1007,317.8 L1016,317.8 L1015,321.8 L1008,321.8 Z" fill="#f8f8f8" stroke="#101010" stroke-width="1"/><path d="M1008,317.8 C1009,313.8 1014,312.8 1016,315.8 L1014,319.8 L1010,319.8 Z" fill="#40c8e0" stroke="#202020" stroke-width="0.8"/><path d="M1008,314.8 L1011,311.8 M1015,314.8 L1018,309.8" stroke="#e8e040" stroke-width="1.5"/>
<path d="M1004,331 L1020,331" stroke="#fff" stroke-width="1.2"/><path d="M1004,332.2 L1020,332.2" stroke="#b0b0c4" stroke-width="0.8"/>
<path d="M1006,342 C1008,338 1014,338 1017,341 L1017,347 L1012,350 L1006,346 Z" fill="#f0d8a0" stroke="#303030" stroke-width="0.8"/><path d="M1006,342 L1012,345 L1012,350 L1006,346 Z" fill="#40a0b0"/>
<path d="M1017.0,349 L1022.0,349 L1019.5,351.5 Z" fill="#000"/>
<path d="M1006,359.8 L1011,354.8 L1017,357.8 L1017,363.8 L1012,366.8 L1006,363.8 Z" fill="#f0d8a0" stroke="#303030" stroke-width="0.8"/><path d="M1012,360.8 L1017,357.8 L1017,363.8 L1012,366.8 Z" fill="#909098"/>
<path d="M1006,377 L1011,374 L1016,376 L1017,383 L1012,385 L1006,384 Z" fill="#e8e030" stroke="#202020" stroke-width="0.9"/><path d="M1012,376 L1017,383 L1016,376 Z" fill="#808088"/>
<path d="M1017.0,384 L1022.0,384 L1019.5,386.5 Z" fill="#000"/>
<path d="M1008,400 L1014,390 L1017,393 L1011,402 Z" fill="#40a0c0" stroke="#202020" stroke-width="1.2"/><path d="M1010,399 L1014,393" stroke="#f0f0f0" stroke-width="1"/>
<path d="M1006,409.8 L1010,406.8 L1017,406.8 L1017,415.8 L1013,418.8 L1006,418.8 Z" fill="#e8f0f8" stroke="#5070a0" stroke-width="0.9"/><path d="M1006,409.8 h7 v9 M1013,409.8 l4,-3" stroke="#5070a0" stroke-width="0.8" fill="none"/><rect x="1007" y="413.8" width="5" height="4" fill="#f0e040"/>
<circle cx="1012" cy="429.7" r="4.5" fill="#f8f0d0" stroke="#303010" stroke-width="1.1"/><path d="M1006,429.7 h12 M1012,423.7 v12" stroke="#303010" stroke-width="0.9"/>
<path d="M1006,448.4 L1011,444.4 L1018,446.4 L1018,452.4 L1012,455.4 L1006,453.4 Z" fill="#e08020" stroke="#202020" stroke-width="0.8"/><path d="M1012,449.4 L1018,446.4 L1018,452.4 L1012,455.4 Z" fill="#40b040"/><path d="M1006,448.4 L1011,444.4 L1018,446.4 L1012,449.4 Z" fill="#f0e040"/>
<path d="M1017.0,454.4 L1022.0,454.4 L1019.5,456.9 Z" fill="#000"/>
<path d="M1004,463.4 L1020,463.4" stroke="#fff" stroke-width="1.2"/><path d="M1004,464.59999999999997 L1020,464.59999999999997" stroke="#b0b0c4" stroke-width="0.8"/>
<path d="M1006,474.5 q6,-4 12,0 v4 q-6,4 -12,0 Z" fill="#50b8e0" stroke="#304050" stroke-width="0.6"/><path d="M1006,478.5 q6,4 12,0 v3 q-6,4 -12,0 Z" fill="#f0e070" stroke="#304050" stroke-width="0.6"/>
<path d="M1017.0,482 L1022.0,482 L1019.5,484.5 Z" fill="#000"/>
<path d="M1004,492.8 L1020,492.8" stroke="#fff" stroke-width="1.2"/><path d="M1004,494.0 L1020,494.0" stroke="#b0b0c4" stroke-width="0.8"/>
<rect x="1012" y="500.8" width="5" height="10" rx="2" fill="#2060b0" stroke="#102040" stroke-width="0.6"/><circle cx="1008" cy="499.8" r="1.5" fill="none" stroke="#3050a0" stroke-width="0.8"/><circle cx="1008" cy="503.8" r="1.5" fill="none" stroke="#3050a0" stroke-width="0.8"/><circle cx="1008" cy="507.8" r="1.5" fill="none" stroke="#3050a0" stroke-width="0.8"/>
<path d="M1017.0,510 L1022.0,510 L1019.5,512.5 Z" fill="#000"/>
<path d="M1004,516.8 L1020,516.8" stroke="#fff" stroke-width="1.2"/><path d="M1004,518.0 L1020,518.0" stroke="#b0b0c4" stroke-width="0.8"/>
<rect x="1006" y="522.8" width="4" height="11" rx="2" fill="#2060b0"/><rect x="1009" y="523.8" width="5" height="9" fill="#f0e070"/><rect x="1013" y="522.8" width="4" height="11" rx="2" fill="#2060b0"/>
<circle cx="1007.5" cy="539.5" r="1.1" fill="#3040c0"/><circle cx="1007.5" cy="542.5" r="1.1" fill="#3040c0"/><circle cx="1007.5" cy="545.5" r="1.1" fill="#3040c0"/><circle cx="1007.5" cy="548.5" r="1.1" fill="#3040c0"/><circle cx="1010.5" cy="539.5" r="1.1" fill="#3040c0"/><circle cx="1010.5" cy="542.5" r="1.1" fill="#3040c0"/><circle cx="1010.5" cy="545.5" r="1.1" fill="#3040c0"/><circle cx="1010.5" cy="548.5" r="1.1" fill="#3040c0"/><circle cx="1013.5" cy="539.5" r="1.1" fill="#3040c0"/><circle cx="1013.5" cy="542.5" r="1.1" fill="#3040c0"/><circle cx="1013.5" cy="545.5" r="1.1" fill="#3040c0"/><circle cx="1013.5" cy="548.5" r="1.1" fill="#3040c0"/><circle cx="1016.5" cy="539.5" r="1.1" fill="#3040c0"/><circle cx="1016.5" cy="542.5" r="1.1" fill="#3040c0"/><circle cx="1016.5" cy="545.5" r="1.1" fill="#3040c0"/><circle cx="1016.5" cy="548.5" r="1.1" fill="#3040c0"/>
<path d="M1017.0,550 L1022.0,550 L1019.5,552.5 Z" fill="#000"/>
<path d="M1004,557.3 L1020,557.3" stroke="#fff" stroke-width="1.2"/><path d="M1004,558.5 L1020,558.5" stroke="#b0b0c4" stroke-width="0.8"/>
<circle cx="1012" cy="568.2" r="3.5" fill="#60d060" stroke="#205020" stroke-width="1"/><path d="M1006,564.2 v-2 h2 M1016,562.2 h2 v2 M1006,572.2 v2 h2 M1018,572.2 v2 h-2" stroke="#101010" stroke-width="1.3" fill="none"/>
<path d="M1017.0,574 L1022.0,574 L1019.5,576.5 Z" fill="#000"/>
</svg>
<svg width="1024" height="640">
<rect x="256.5" y="34.5" width="40" height="11.5" fill="#fff" stroke="#a0a0b0" stroke-width="1"/><path d="M257,45.5 h39 M257,35.5 v10" stroke="#707080" stroke-width="0.6" fill="none"/><rect x="287" y="36" width="8.5" height="9" fill="#ece9d8" stroke="#b0b0a0" stroke-width="0.6"/><path d="M288.8,39.5 L293.8,39.5 L291.3,42.0 Z" fill="#000"/>
<rect x="259" y="36" width="23.5" height="7.5" fill="#1070e8" stroke="#0040a0" stroke-width="0.5"/>
<rect x="299.5" y="34.5" width="41" height="11.5" fill="#fff" stroke="#a0a0b0" stroke-width="1"/><path d="M300,45.5 h40 M300,35.5 v10" stroke="#707080" stroke-width="0.6" fill="none"/><rect x="331" y="36" width="8.5" height="9" fill="#ece9d8" stroke="#b0b0a0" stroke-width="0.6"/><path d="M332.8,39.5 L337.8,39.5 L335.3,42.0 Z" fill="#000"/>
<rect x="342.5" y="34.5" width="41" height="11.5" fill="#fff" stroke="#a0a0b0" stroke-width="1"/><path d="M343,45.5 h40 M343,35.5 v10" stroke="#707080" stroke-width="0.6" fill="none"/><rect x="374" y="36" width="8.5" height="9" fill="#ece9d8" stroke="#b0b0a0" stroke-width="0.6"/><path d="M375.8,39.5 L380.8,39.5 L378.3,42.0 Z" fill="#000"/>
<rect x="386.5" y="34.5" width="39" height="11.5" fill="#fff" stroke="#a0a0b0" stroke-width="1"/><path d="M387,45.5 h38 M387,35.5 v10" stroke="#707080" stroke-width="0.6" fill="none"/><rect x="416" y="36" width="8.5" height="9" fill="#ece9d8" stroke="#b0b0a0" stroke-width="0.6"/><path d="M417.8,39.5 L422.8,39.5 L420.3,42.0 Z" fill="#000"/>
<rect x="429.5" y="34.5" width="26" height="11.5" fill="#fff" stroke="#a0a0b0" stroke-width="1"/><path d="M430,45.5 h25 M430,35.5 v10" stroke="#707080" stroke-width="0.6" fill="none"/><rect x="446" y="36" width="8.5" height="9" fill="#ece9d8" stroke="#b0b0a0" stroke-width="0.6"/><path d="M447.8,39.5 L452.8,39.5 L450.3,42.0 Z" fill="#000"/>
<rect x="458.5" y="34.5" width="25" height="11.5" fill="#f0f0f0" stroke="#a0a0b0" stroke-width="1"/><path d="M459,45.5 h24 M459,35.5 v10" stroke="#707080" stroke-width="0.6" fill="none"/><rect x="474" y="36" width="8.5" height="9" fill="#ece9d8" stroke="#b0b0a0" stroke-width="0.6"/><path d="M475.8,39.5 h5 l-2.5,2.5 Z" fill="#b0b0a0"/>
<rect x="485.5" y="34.5" width="41" height="11.5" fill="#fff" stroke="#a0a0b0" stroke-width="1"/><path d="M486,45.5 h40 M486,35.5 v10" stroke="#707080" stroke-width="0.6" fill="none"/><rect x="517" y="36" width="8.5" height="9" fill="#ece9d8" stroke="#b0b0a0" stroke-width="0.6"/><path d="M518.8,39.5 L523.8,39.5 L521.3,42.0 Z" fill="#000"/>
</svg>
<svg width="1024" height="640">
<path d="M915,101 C913,88 920,72 930,67.5 C942,70 953,84 955.6,98 C948,96 940,95.5 930,96 C925,97 920,99 915,101 Z" fill="#103838" stroke="#e8e8f0" stroke-width="1.2"/>
<ellipse cx="932.5" cy="120.5" rx="21.5" ry="4.8" transform="rotate(-2 932.5 120.5)" fill="#103838" stroke="#e8e8f0" stroke-width="1.2"/>
<path d="M929.6,60 L931.5,117" stroke="#e0e0ec" stroke-width="1.3"/>
<circle cx="929.6" cy="59" r="2.2" fill="#d8c8f0"/>
<rect x="928.5" y="117" width="6" height="6" rx="2" fill="#e01010"/>
<text x="932" y="62" font-family="Liberation Sans" font-size="6.5" fill="#c8c850">z</text>
<text x="917" y="106" font-family="Liberation Sans" font-size="6.5" fill="#c8c850">x</text>
<text x="956" y="102" font-family="Liberation Sans" font-size="6.5" fill="#c8c850">y</text>
<path d="M984,553 L984,568 L975,574 M984,568 L995,568" stroke="#c8c8c8" stroke-width="0.9" fill="none"/>
<text x="982" y="551" font-family="Liberation Sans" font-size="6.5" fill="#c8c8c8">z</text>
<text x="970" y="576" font-family="Liberation Sans" font-size="6.5" fill="#c8c8c8">x</text>
<text x="994" y="571" font-family="Liberation Sans" font-size="6.5" fill="#c8c8c8">y</text>
</svg>
<div class="a" style="left:942.5px;top:224px;width:26.0px;height:101.5px;background:linear-gradient(90deg,#e8e8f4,#d4d4e4);border:2px solid #1c3cc8;border-top-width:0"></div>
<div class="a" style="left:942.5px;top:224px;width:26.0px;height:13px;background:linear-gradient(#3a78f4,#1848d8)"></div>
<div class="t" style="left:945.0px;top:226.5px;font-size:9px;font-weight:bold;color:#fff">B..</div>
<div class="a" style="left:957.5px;top:227px;width:9px;height:9px;background:#e06040;border:1px solid #f0d0c0;border-radius:1.5px"></div>
<div class="a" style="left:972.5px;top:213px;width:24.0px;height:157.5px;background:linear-gradient(90deg,#e8e8f4,#d4d4e4);border:2px solid #1c3cc8;border-top-width:0"></div>
<div class="a" style="left:972.5px;top:213px;width:24.0px;height:13px;background:linear-gradient(#3a78f4,#1848d8)"></div>
<div class="t" style="left:975.0px;top:215.5px;font-size:9px;font-weight:bold;color:#fff">Q..</div>
<div class="a" style="left:986px;top:216px;width:9px;height:9px;background:#e06040;border:1px solid #f0d0c0;border-radius:1.5px"></div>
<svg width="1024" height="640">
<path d="M959.5,229.5 l4,4 M963.5,229.5 l-4,4" stroke="#fff" stroke-width="1.3"/>
<path d="M988,218.5 l4,4 M992,218.5 l-4,4" stroke="#fff" stroke-width="1.3"/>
<path d="M947,238 L963,238" stroke="#fff" stroke-width="1.2"/><path d="M947,239.2 L963,239.2" stroke="#b0b0c4" stroke-width="0.8"/>
<path d="M977,227 L992,227" stroke="#fff" stroke-width="1.2"/><path d="M977,228.2 L992,228.2" stroke="#b0b0c4" stroke-width="0.8"/>
<path d="M950,253 L955,249 L961,251 L961,257 L955,260 L950,257 Z" fill="#f0e0a0" stroke="#303030" stroke-width="0.8"/><circle cx="954" cy="256" r="3" fill="#f0f0a0" stroke="#303030" stroke-width="0.7"/><rect x="956" y="251" width="4" height="4" fill="#40a0c0"/>
<path d="M947,263 h18" stroke="#fff" stroke-width="1"/>
<path d="M950,273 L955,269 L961,271 L961,277 L955,280 L950,277 Z" fill="#f0e0a0" stroke="#303030" stroke-width="0.8"/><circle cx="954" cy="276" r="3" fill="#f0f0a0" stroke="#303030" stroke-width="0.7"/><rect x="956" y="271" width="4" height="4" fill="#40a0c0"/>
<path d="M962.5,281 L967.5,281 L965,283.5 Z" fill="#000"/>
<circle cx="954" cy="295" r="3.5" fill="#f0e0b0" stroke="#303030" stroke-width="0.7"/><circle cx="958" cy="292" r="3" fill="#30a0c0" stroke="#303030" stroke-width="0.7"/>
<path d="M947,303 h18" stroke="#fff" stroke-width="1"/>
<circle cx="954" cy="315" r="3.5" fill="#f0e0b0" stroke="#303030" stroke-width="0.7"/><circle cx="958" cy="312" r="3" fill="#30a0c0" stroke="#303030" stroke-width="0.7"/>
<path d="M978.5,239.5 L982.0,236 L990.5,236 L990.5,244.5 L987.0,248 L978.5,248 Z" fill="#60e0ff" stroke="#1838b8" stroke-width="0.9"/><rect x="978.5" y="239.5" width="8.5" height="8.5" fill="#40d0f8" stroke="#1838b8" stroke-width="0.9"/><path d="M987.0,239.5 L990.5,236" stroke="#1838b8" stroke-width="0.9"/>
<path d="M978.5,257.5 L982.0,254 L990.5,254 L990.5,262.5 L987.0,266 L978.5,266 Z" fill="#f0f4fa" stroke="#1838b8" stroke-width="0.9"/><rect x="978.5" y="257.5" width="8.5" height="8.5" fill="#40d0f8" stroke="#1838b8" stroke-width="0.9"/><path d="M987.0,257.5 L990.5,254" stroke="#1838b8" stroke-width="0.9"/>
<path d="M978.5,274.5 L982.0,271 L990.5,271 L990.5,279.5 L987.0,283 L978.5,283 Z" fill="#40c0e8" stroke="#1838b8" stroke-width="0.9"/><rect x="978.5" y="274.5" width="8.5" height="8.5" fill="#e8f0f8" stroke="#1838b8" stroke-width="0.9"/><path d="M987.0,274.5 L990.5,271" stroke="#1838b8" stroke-width="0.9"/>
<path d="M978.5,290.5 L982.0,287 L990.5,287 L990.5,295.5 L987.0,299 L978.5,299 Z" fill="#f0f4fa" stroke="#1838b8" stroke-width="0.9"/><rect x="978.5" y="290.5" width="8.5" height="8.5" fill="#40c8f0" stroke="#1838b8" stroke-width="0.9"/><path d="M987.0,290.5 L990.5,287" stroke="#1838b8" stroke-width="0.9"/>
<path d="M978.5,307.5 L982.0,304 L990.5,304 L990.5,312.5 L987.0,316 L978.5,316 Z" fill="#40c8f0" stroke="#1838b8" stroke-width="0.9"/><rect x="978.5" y="307.5" width="8.5" height="8.5" fill="#e8f0f8" stroke="#1838b8" stroke-width="0.9"/><path d="M987.0,307.5 L990.5,304" stroke="#1838b8" stroke-width="0.9"/>
<path d="M978.5,324.5 L982.0,321 L990.5,321 L990.5,329.5 L987.0,333 L978.5,333 Z" fill="#60e0ff" stroke="#1838b8" stroke-width="0.9"/><rect x="978.5" y="324.5" width="8.5" height="8.5" fill="#40d0f8" stroke="#1838b8" stroke-width="0.9"/><path d="M987.0,324.5 L990.5,321" stroke="#1838b8" stroke-width="0.9"/>
<path d="M978.5,340.5 L982.0,337 L990.5,337 L990.5,345.5 L987.0,349 L978.5,349 Z" fill="#f0f4fa" stroke="#1838b8" stroke-width="0.9"/><rect x="978.5" y="340.5" width="8.5" height="8.5" fill="#e8f0f8" stroke="#1838b8" stroke-width="0.9"/><path d="M987.0,340.5 L990.5,337" stroke="#1838b8" stroke-width="0.9"/>
<rect x="979" y="355.5" width="10" height="10" fill="#40a8b0" stroke="#203040" stroke-width="0.8"/><rect x="981.5" y="358" width="6" height="5.5" fill="#101820"/><path d="M983,362 v-3 l3,2" stroke="#e0e0e0" stroke-width="0.8" fill="none"/>
</svg>
<svg width="1024" height="640">
<path d="M7,626 q2.5,-1.5 5,-0.5 v4.5 q-2.5,-1 -5,0.5 Z" fill="#f07030"/><path d="M12.5,625.5 q2.5,1 5,-0.5 v4.5 q-2.5,1.5 -5,0.5 Z" fill="#60c030"/><path d="M6.5,631 q2.5,-1.5 5,-0.5 v4.5 q-2.5,-1 -5,0.5 Z" fill="#3080e0"/><path d="M12,630.5 q2.5,1 5,-0.5 v4.5 q-2.5,1.5 -5,0.5 Z" fill="#f0d020"/>
<circle cx="67" cy="631" r="4.5" fill="#f08020"/><circle cx="66" cy="629.5" r="2" fill="#ffd080"/>
<rect x="77.5" y="626" width="9" height="9" rx="2" fill="#90b8f0" stroke="#f0f8ff" stroke-width="1"/><rect x="79.5" y="628" width="5" height="5" fill="#3050a0"/>
<ellipse cx="97" cy="631" rx="5" ry="4.5" fill="none" stroke="#60b0ff" stroke-width="1.8"/><path d="M92.5,631 h9" stroke="#60b0ff" stroke-width="1.5"/><path d="M99,635 l3,-1" stroke="#2a64e0" stroke-width="2"/>
<path d="M108,626.5 l1.5,1.5 l-1.5,1.5 M111,626.5 l1.5,1.5 l-1.5,1.5" stroke="#e0e8ff" stroke-width="0.8" fill="none"/>
<rect x="119" y="622.5" width="95" height="17" rx="2.5" fill="#3c80f4" stroke="#2a60d0" stroke-width="0.6"/>
<rect x="216" y="622.5" width="94" height="17" rx="2.5" fill="#3c80f4" stroke="#2a60d0" stroke-width="0.6"/>
<rect x="312.5" y="622.5" width="98" height="17" rx="2.5" fill="#1e48b8" stroke="#183c98" stroke-width="0.6"/>
<rect x="412" y="622.5" width="95" height="17" rx="2.5" fill="#3c80f4" stroke="#2a60d0" stroke-width="0.6"/>
<circle cx="129" cy="631" r="4" fill="#f0d050" stroke="#805010" stroke-width="0.6"/><circle cx="127.5" cy="630.5" r="0.8" fill="#000"/><circle cx="130.5" cy="630.5" r="0.8" fill="#000"/>
<rect x="222" y="625.5" width="10" height="10" fill="#e0f0e0" stroke="#205030" stroke-width="1"/><path d="M224,633 l3,-5 l3,5" stroke="#205030" fill="none" stroke-width="0.8"/>
<rect x="318" y="626" width="10" height="10" fill="#000"/><path d="M319,627 l4,0 l4,8 l-3,0 Z" fill="#4070c0"/><path d="M322,630 l3,4" stroke="#f0a060" stroke-width="2"/>
<rect x="418" y="625" width="9" height="11" fill="#f0f0f0" stroke="#506080" stroke-width="0.8"/><path d="M419,632 h6 M419,629 h6" stroke="#4060a0" stroke-width="0.8"/>
<rect x="950" y="622" width="74" height="18" fill="#168cf0"/>
<path d="M950.5,622 L950.5,640" stroke="#1858b8" stroke-width="1"/>
<circle cx="950" cy="631" r="5" fill="#5ab0f8" stroke="#e0f0ff" stroke-width="0.8"/><path d="M951.5,628.5 l-2.5,2.5 l2.5,2.5" stroke="#fff" stroke-width="1.2" fill="none"/>
<circle cx="962" cy="631" r="4.5" fill="#f0d040"/><rect x="967" y="626" width="7" height="7" fill="#6060b0"/><rect x="970" y="629" width="6" height="6" fill="#4050a0"/>
<text x="872" y="635" font-family="Liberation Sans" font-weight="bold" font-size="10" fill="#fff">A</text>
<rect x="896" y="626" width="9" height="9" fill="#f0d060" stroke="#303030" stroke-width="0.6"/><rect x="909" y="626" width="9" height="9" fill="#fff" stroke="#303030" stroke-width="0.6"/><text x="911" y="634" font-family="Liberation Sans" font-weight="bold" font-size="8" fill="#000">?</text>
<path d="M924,625 h5 M923,628 h5" stroke="#fff" stroke-width="1"/><path d="M924,632 l2,3 l2,-3 Z" fill="#e0e8ff"/>
</svg>
<div class="t" style="left:883px;top:625.5px;font-size:10.5px;color:#fff;font-weight:bold">漢</div>
<div class="t" style="left:194.50px;top:36px;font-size:10.15px;font-weight:normal;color:#1a1a1a;transform:scaleX(0.734);">Scale Planes</div>
<div class="t" style="left:301.00px;top:35px;font-size:9.00px;font-weight:normal;color:#1a1a1a;transform:scaleX(0.809);">Auto</div>
<div class="t" style="left:344.00px;top:35px;font-size:9.00px;font-weight:normal;color:#1a1a1a;transform:scaleX(0.809);">Auto</div>
<div class="t" style="left:389.00px;top:35px;font-size:9.00px;font-weight:normal;color:#1a1a1a;transform:scaleX(0.809);">Auto</div>
<div class="t" style="left:432.70px;top:35px;font-size:9.00px;font-weight:normal;color:#1a1a1a;transform:scaleX(0.763);">Aut</div>
<div class="t" style="left:487.00px;top:35px;font-size:9.00px;font-weight:normal;color:#1a1a1a;transform:scaleX(0.837);">None</div>
<div class="t" style="left:462.00px;top:35px;font-size:9.00px;font-weight:normal;color:#b8b8a8;transform:scaleX(0.667);">Aut</div>
<div class="t" style="left:620.00px;top:593px;font-size:9.15px;font-weight:normal;color:#1a1a1a;transform:scaleX(0.819);">PartBody</div>
<div class="t" style="left:137.00px;top:627px;font-size:9.00px;font-weight:normal;color:#fff;transform:scaleX(0.799);">NateOn</div>
<div class="t" style="left:234.00px;top:627px;font-size:9.00px;font-weight:normal;color:#fff;transform:scaleX(0.846);">AutoCAD 2006 - [...</div>
<div class="t" style="left:332.50px;top:627px;font-size:9.00px;font-weight:normal;color:#fff;transform:scaleX(0.723);">CATIA V5 - [Part1]</div>
<div class="t" style="left:431px;top:625.5px;font-size:9px;color:#fff;transform:scaleX(0.92)">Daum 카페 | Catia...</div>
<div class="t" style="left:1000.20px;top:627px;font-size:8.40px;font-weight:normal;color:#fff;transform:scaleX(0.767);">10:44</div>
<div class="t" style="left:982px;top:626.5px;font-size:9.5px;color:#fff;transform:scaleX(0.72)">오전</div></body></html>
